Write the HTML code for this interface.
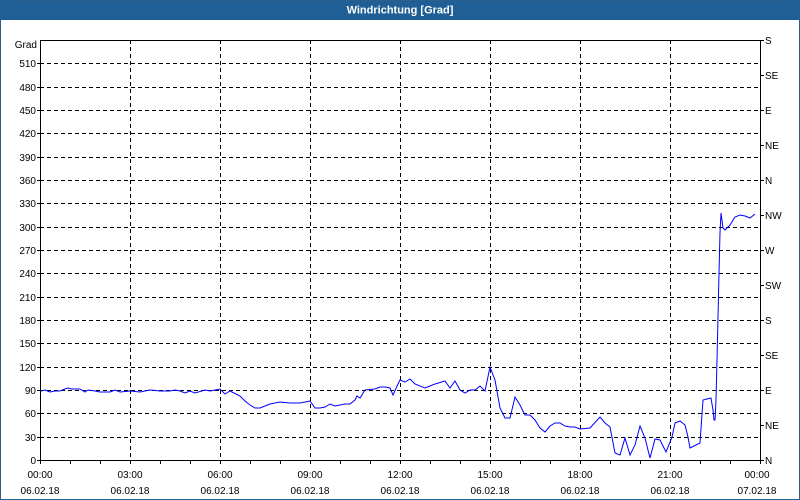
<!DOCTYPE html>
<html><head><meta charset="utf-8"><style>
html,body{margin:0;padding:0;background:#fff;}
svg{display:block;font-family:"Liberation Sans",Tahoma,sans-serif;}
</style></head><body>
<svg width="800" height="500" viewBox="0 0 800 500" xmlns="http://www.w3.org/2000/svg">
<rect x="0" y="0" width="800" height="500" fill="#fff"/>
<rect x="0" y="0" width="800" height="20" fill="#1f5f96"/>
<rect x="0.5" y="0.5" width="799" height="499" fill="none" stroke="#2a5e8c" stroke-width="1"/>
<text x="400" y="13.5" text-anchor="middle" fill="#fff" font-size="11" font-weight="bold">Windrichtung [Grad]</text>

<g stroke="#000" stroke-width="1" stroke-dasharray="4,3" fill="none">
<path d="M40 437.5H760M40 413.5H760M40 390.5H760M40 367.5H760M40 343.5H760M40 320.5H760M40 297.5H760M40 273.5H760M40 250.5H760M40 227.5H760M40 203.5H760M40 180.5H760M40 157.5H760M40 133.5H760M40 110.5H760M40 87.5H760M40 63.5H760"/>
<path d="M130.5 40V460M220.5 40V460M310.5 40V460M400.5 40V460M490.5 40V460M580.5 40V460M670.5 40V460"/>
</g>
<g stroke="#000" stroke-width="1" fill="none">
<path d="M40.5 40V460.5H760.5V40M40 40.5H760"/>
<path d="M37 460.5H40M37 437.5H40M37 413.5H40M37 390.5H40M37 367.5H40M37 343.5H40M37 320.5H40M37 297.5H40M37 273.5H40M37 250.5H40M37 227.5H40M37 203.5H40M37 180.5H40M37 157.5H40M37 133.5H40M37 110.5H40M37 87.5H40M37 63.5H40"/>
<path d="M760 460.5H764M760 425.5H764M760 390.5H764M760 355.5H764M760 320.5H764M760 285.5H764M760 250.5H764M760 215.5H764M760 180.5H764M760 145.5H764M760 110.5H764M760 75.5H764M760 40.5H764"/>
<path d="M40.5 460V464M70.5 460V464M100.5 460V464M130.5 460V464M160.5 460V464M190.5 460V464M220.5 460V464M250.5 460V464M280.5 460V464M310.5 460V464M340.5 460V464M370.5 460V464M400.5 460V464M430.5 460V464M460.5 460V464M490.5 460V464M520.5 460V464M550.5 460V464M580.5 460V464M610.5 460V464M640.5 460V464M670.5 460V464M700.5 460V464M730.5 460V464M760.5 460V464"/>
</g>

<g font-size="10" fill="#000" text-anchor="end">
<text x="37" y="48">Grad</text>
<text x="36" y="464">0</text><text x="36" y="441">30</text><text x="36" y="417">60</text><text x="36" y="394">90</text>
<text x="36" y="371">120</text><text x="36" y="347">150</text><text x="36" y="324">180</text><text x="36" y="301">210</text>
<text x="36" y="277">240</text><text x="36" y="254">270</text><text x="36" y="231">300</text><text x="36" y="207">330</text>
<text x="36" y="184">360</text><text x="36" y="161">390</text><text x="36" y="137">420</text><text x="36" y="114">450</text>
<text x="36" y="91">480</text><text x="36" y="67">510</text>
</g>
<g font-size="10" fill="#000">
<text x="765" y="464">N</text><text x="765" y="429">NE</text><text x="765" y="394">E</text><text x="765" y="359">SE</text>
<text x="765" y="324">S</text><text x="765" y="289">SW</text><text x="765" y="254">W</text><text x="765" y="219">NW</text>
<text x="765" y="184">N</text><text x="765" y="149">NE</text><text x="765" y="114">E</text><text x="765" y="79">SE</text><text x="765" y="44">S</text>
</g>
<g font-size="10" fill="#000" text-anchor="middle">
<text x="40" y="478">00:00</text><text x="40" y="494">06.02.18</text>
<text x="130" y="478">03:00</text><text x="130" y="494">06.02.18</text>
<text x="220" y="478">06:00</text><text x="220" y="494">06.02.18</text>
<text x="310" y="478">09:00</text><text x="310" y="494">06.02.18</text>
<text x="400" y="478">12:00</text><text x="400" y="494">06.02.18</text>
<text x="490" y="478">15:00</text><text x="490" y="494">06.02.18</text>
<text x="580" y="478">18:00</text><text x="580" y="494">06.02.18</text>
<text x="670" y="478">21:00</text><text x="670" y="494">06.02.18</text>
<text x="757" y="478">00:00</text><text x="757" y="494">07.02.18</text>
</g>

<polyline fill="none" stroke="#0000ff" stroke-width="1" points="41,391 45,390 50,392 55,391 60,391 65,389 68,388 72,389 80,389 85,392 88,390 95,391 100,392 110,392 115,390 120,392 130,391 140,392 150,390 160,391 170,391 175,390 180,391 185,393 190,391 195,393 205,390 210,391 215,390 220,389 225,394 230,391 240,396 245,401 250,405 255,408 260,408 265,406 270,404 280,402 290,403 300,403 305,402 310,401 315,408 320,408 325,407 330,404 335,406 340,405 345,404 350,404 355,400 357,396 360,398 365,390 375,389 380,387 385,387 390,388 393,395 398,384 400,380 405,382 410,379 415,384 425,388 435,384 445,381 450,388 455,381 460,390 465,393 470,390 475,390 480,386 485,391 490,367 495,380 500,408 505,418 510,418 515,397 520,405 525,415 530,415 535,420 540,428 545,432 550,426 555,423 560,423 565,426 570,427 575,427 580,429 590,428 600,417 605,423 610,427 615,453 620,455 625,438 630,455 635,445 640,426 645,438 650,458 655,439 660,440 666,452 672,437 675,423 680,421 685,425 688,437 690,448 700,443 703,400 707,399 711,398 713,410 714,420 715,420 716,400 717,360 718,317 719,273 720,233 721,213 723,228 725,230 730,225 735,217 740,215 745,216 750,218 755,214"/>
</svg>
</body></html>
